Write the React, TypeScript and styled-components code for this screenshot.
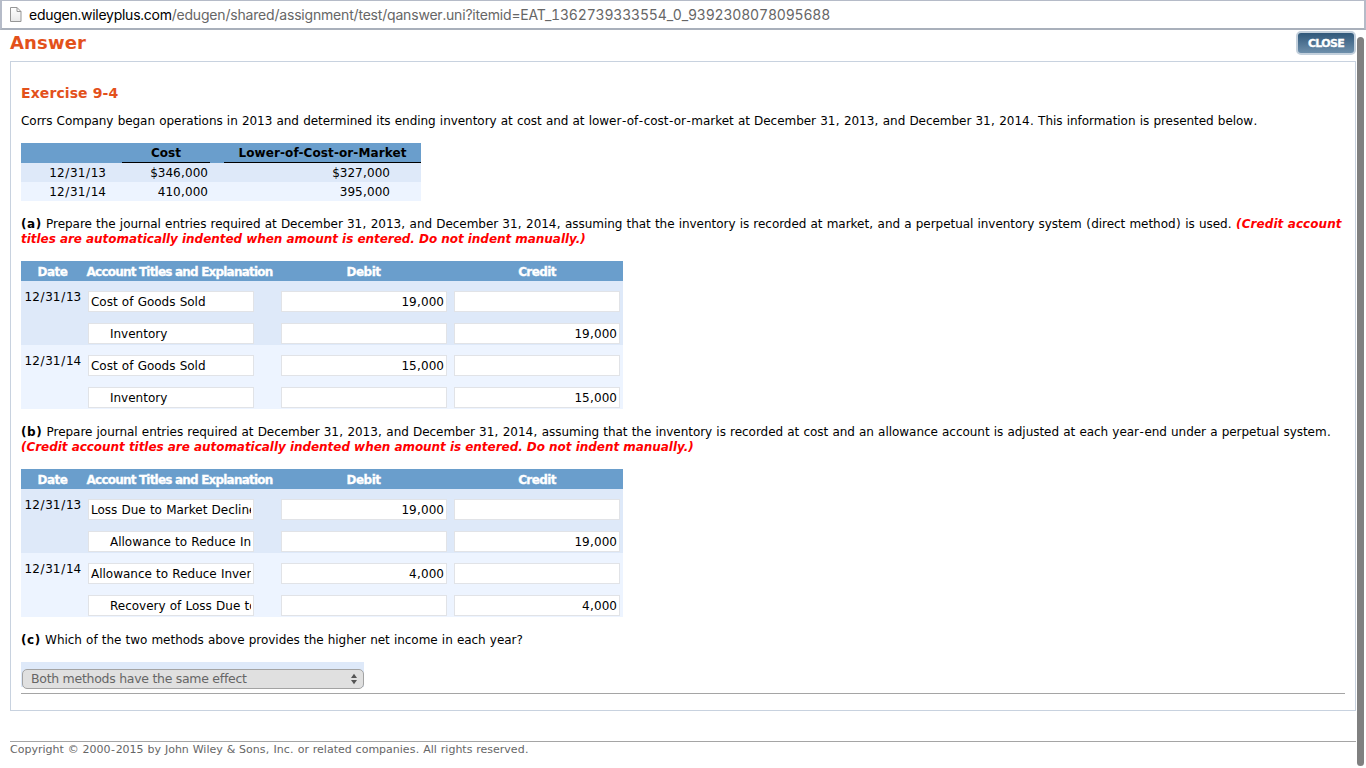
import React from 'react';
import styled, { createGlobalStyle } from 'styled-components';

const GlobalStyle = createGlobalStyle`
  * { box-sizing: border-box; }
  body {
    margin: 0;
    background: #fff;
    color: #000;
    font-family: Verdana, "DejaVu Sans", sans-serif;
    font-size: 12px;
    overflow: hidden;
  }
`;

const Window = styled.div`
  width: 1366px;
  height: 768px;
  display: flex;
  flex-direction: column;
`;

const AddressBar = styled.div`
  flex: none;
  display: flex;
  align-items: center;
  width: 1366px;
  height: 30px;
  padding: 0 0 0 8px;
  border: solid #b5bbc8;
  border-width: 1px 2px 2px 2px;
  border-bottom-color: #a9b0bb;
  background: #fff;
`;

const Url = styled.div`
  margin-left: 6px;
  font-family: Inter, sans-serif;
  font-size: 14px;
  font-variant-numeric: tabular-nums;
  line-height: 20px;
  white-space: nowrap;
  color: #666;
  letter-spacing: -0.19px;
`;

const Domain = styled.span`
  color: #000;
  letter-spacing: -0.26px;
`;

const Viewport = styled.div`
  flex: 1;
  display: flex;
  justify-content: space-between;
  padding: 0 2px 0 10px;
`;

const Page = styled.div`
  width: 1346px;
`;

const ScrollThumb = styled.div`
  width: 7px;
  height: 729px;
  margin-top: 7px;
  border-radius: 4px;
  background: #808080;
`;

const TitleBar = styled.div`
  display: flex;
  justify-content: space-between;
  height: 31px;
`;

const Heading = styled.h1`
  margin: 0;
  color: #e3511b;
  font-size: 18px;
  line-height: 26px;
  letter-spacing: 0.15px;
`;

const CloseButton = styled.button`
  width: 60px;
  height: 24px;
  margin: 1px 0 0;
  padding: 1px 0 0;
  border: 2px solid #c3d0dc;
  border-radius: 5px;
  background: linear-gradient(#30587a, #6e8fab);
  color: #fff;
  font: bold 11px/19px "DejaVu Sans", sans-serif;
  letter-spacing: -0.65px;
  -webkit-text-stroke: 0.3px #fff;
`;

const Panel = styled.main`
  height: 650px;
  padding: 20px 10px 0;
  border: 1px solid #c8d2df;
`;

const ExerciseTitle = styled.h2`
  margin: 0 0 9px;
  color: #e3511b;
  font-size: 14px;
  line-height: 22px;
  letter-spacing: 0.1px;
`;

const Paragraph = styled.p`
  margin: 0 0 14px;
  padding-top: 1px;
  line-height: 15px;
  white-space: nowrap;
`;

const Line = styled.span`
  display: block;
  height: 15px;
  word-spacing: 0.42px;
  letter-spacing: -0.04px;
`;

const Mark = styled.span<{ $extra: number }>`
  margin: 0 ${(p) => p.$extra / 2}px;
`;

const Hint = styled.em<{ $ls?: number }>`
  color: #f00;
  font-weight: bold;
  word-spacing: 0;
  letter-spacing: ${(p) => p.$ls ?? 0}px;
`;

const Part = styled.b`
  letter-spacing: 0.6px;
`;

const CostTable = styled.div`
  width: 400px;
  margin-bottom: 15px;
`;

const CostRow = styled.div<{ $tone: string; $h: number }>`
  display: grid;
  grid-template-columns: 101px 88px 14px 197px;
  height: ${(p) => p.$h}px;
  line-height: 19px;
  background: ${(p) => p.$tone};
`;

const CostHead = styled.div<{ $col: number; $ls: number }>`
  grid-column: ${(p) => p.$col};
  padding-top: 1px;
  border-bottom: 1px solid #000;
  font-weight: bold;
  line-height: 18px;
  text-align: center;
  white-space: nowrap;
  letter-spacing: ${(p) => p.$ls}px;
`;

const CostCell = styled.div<{ $col: number; $right: number }>`
  grid-column: ${(p) => p.$col};
  padding: 1px ${(p) => p.$right}px 0 0;
  line-height: 18px;
  text-align: right;
`;

const Journal = styled.div`
  width: 602px;
  margin-bottom: 15px;
`;

const JournalHead = styled.div`
  display: grid;
  grid-template-columns: 63px 191px 177px 170px;
  height: 20px;
  padding-top: 1px;
  background: #6a9ecc;
  color: #fff;
  font-weight: bold;
  line-height: 20px;
  text-align: center;
  white-space: nowrap;
  -webkit-text-stroke: 0.3px #fff;
`;

const ColumnTitle = styled.span<{ $ls: number }>`
  height: 19px;
  letter-spacing: ${(p) => p.$ls}px;
`;

const EntryGroup = styled.div<{ $tone: string }>`
  display: grid;
  grid-template-columns: 67px 532px;
  height: 64px;
  background: ${(p) => p.$tone};
`;

const EntryDate = styled.div`
  padding: 9px 0 0 3.5px;
  line-height: 15px;
`;

const Fields = styled.div`
  display: flex;
  flex-direction: column;
  gap: 11px;
  padding-top: 10px;
`;

const FieldRow = styled.div`
  display: grid;
  grid-template-columns: 193px 173px 166px;
  height: 21px;
`;

const Field = styled.div<{ $amount?: boolean }>`
  width: 166px;
  height: 21px;
  padding: 1px 2px 0;
  border: 1px solid #e1e3e7;
  background: #fff;
  line-height: 18px;
  text-align: ${(p) => (p.$amount ? 'right' : 'left')};
`;

const FieldText = styled.div<{ $indent?: boolean }>`
  overflow: hidden;
  white-space: nowrap;
  padding-left: ${(p) => (p.$indent ? 19 : 0)}px;
  word-spacing: 0.42px;
  letter-spacing: -0.01px;
`;

const SelectWrap = styled.div`
  width: 343px;
  height: 25px;
  padding: 7px 0 0 1px;
  background: #dee9f9;
`;

const Select = styled.div`
  display: flex;
  align-items: center;
  justify-content: space-between;
  width: 342px;
  height: 20px;
  padding: 0 6px 0 8px;
  border: 1px solid #a3a3a3;
  border-radius: 5px;
  background: #e0e0e0;
  color: #666;
  font-size: 12.5px;
  line-height: 18px;
  white-space: nowrap;
  letter-spacing: -0.28px;
`;

const Rule = styled.div`
  height: 1px;
  margin-top: 6px;
  background: #a5a5a5;
`;

const Footer = styled.footer`
  margin-top: 30px;
  border-top: 1px solid #a5a5a5;
  color: #666;
  font-size: 11px;
  line-height: 15px;
  white-space: nowrap;
  word-spacing: 0.4px;
`;

type Entry = { title: string; debit?: string; credit?: string; indent?: boolean };
type Group = { date: string; entries: Entry[] };

const blue = '#6a9ecc';
const tones = ['#dee9f9', '#edf4ff'];

// Extra advance for punctuation, which is set wider than the letters.
const markSpacing: Record<string, number> = { '-': 1.1, '/': 1.4, ',': 0.55, '.': 0.55, '(': 0.75, ')': 0.75 };

function Copy({ children }: { children: string }) {
  return (
    <>
      {children.split(/([-/,.()])/).map((part, i) =>
        part in markSpacing ? <Mark key={i} $extra={markSpacing[part]}>{part}</Mark> : part
      )}
    </>
  );
}

const marketEntries: Group[] = [
  { date: '12/31/13', entries: [{ title: 'Cost of Goods Sold', debit: '19,000' }, { title: 'Inventory', credit: '19,000', indent: true }] },
  { date: '12/31/14', entries: [{ title: 'Cost of Goods Sold', debit: '15,000' }, { title: 'Inventory', credit: '15,000', indent: true }] },
];

const allowanceEntries: Group[] = [
  { date: '12/31/13', entries: [{ title: 'Loss Due to Market Decline', debit: '19,000' }, { title: 'Allowance to Reduce Inventory', credit: '19,000', indent: true }] },
  { date: '12/31/14', entries: [{ title: 'Allowance to Reduce Inventory', debit: '4,000' }, { title: 'Recovery of Loss Due to Market', credit: '4,000', indent: true }] },
];

function JournalTable({ groups }: { groups: Group[] }) {
  return (
    <Journal>
      <JournalHead>
        <ColumnTitle $ls={-0.45}>Date</ColumnTitle>
        <ColumnTitle $ls={-0.8}>Account Titles and Explanation</ColumnTitle>
        <ColumnTitle $ls={-0.5}>Debit</ColumnTitle>
        <ColumnTitle $ls={-0.6}>Credit</ColumnTitle>
      </JournalHead>
      {groups.map((g, i) => (
        <EntryGroup key={g.date} $tone={tones[i]}>
          <EntryDate><Copy>{g.date}</Copy></EntryDate>
          <Fields>
            {g.entries.map((e) => (
              <FieldRow key={e.title}>
                <Field><FieldText $indent={e.indent}>{e.title}</FieldText></Field>
                <Field $amount>{e.debit && <Copy>{e.debit}</Copy>}</Field>
                <Field $amount>{e.credit && <Copy>{e.credit}</Copy>}</Field>
              </FieldRow>
            ))}
          </Fields>
        </EntryGroup>
      ))}
    </Journal>
  );
}

function PageIcon() {
  return (
    <svg width="13" height="17" viewBox="0 0 13 17" fill="none">
      <defs>
        <linearGradient id="sheet" x1="0" y1="0" x2="0" y2="1">
          <stop offset="0" stopColor="#fff" />
          <stop offset="1" stopColor="#e8e8e8" />
        </linearGradient>
      </defs>
      <path d="M.5 1.500h6.500l4 4v10H.5z" fill="url(#sheet)" stroke="#969696" />
      <path d="M7 1.500v4h4" stroke="#969696" />
    </svg>
  );
}

export default function App() {
  return (
    <Window>
      <GlobalStyle />
      <AddressBar>
        <PageIcon />
        <Url>
          <Domain>edugen.wileyplus.com</Domain>
          /edugen/shared/assignment/test/qanswer.uni?itemid=EAT_1362739333554_0_9392308078095688
        </Url>
      </AddressBar>
      <Viewport>
        <Page>
          <TitleBar>
            <Heading>Answer</Heading>
            <CloseButton>CLOSE</CloseButton>
          </TitleBar>
          <Panel>
            <ExerciseTitle>Exercise 9-4</ExerciseTitle>
            <Paragraph>
              <Line>
                <Copy>Corrs Company began operations in 2013 and determined its ending inventory at cost and at lower-of-cost-or-market at December 31, 2013, and December 31, 2014. This information is presented below.</Copy>
              </Line>
            </Paragraph>
            <CostTable>
              <CostRow $tone={blue} $h={20}>
                <CostHead $col={2} $ls={0}>Cost</CostHead>
                <CostHead $col={4} $ls={0.1}>Lower-of-Cost-or-Market</CostHead>
              </CostRow>
              <CostRow $tone={tones[0]} $h={19}>
                <CostCell $col={1} $right={16}><Copy>12/31/13</Copy></CostCell>
                <CostCell $col={2} $right={2}><Copy>$346,000</Copy></CostCell>
                <CostCell $col={4} $right={31}><Copy>$327,000</Copy></CostCell>
              </CostRow>
              <CostRow $tone={tones[1]} $h={19}>
                <CostCell $col={1} $right={16}><Copy>12/31/14</Copy></CostCell>
                <CostCell $col={2} $right={2}><Copy>410,000</Copy></CostCell>
                <CostCell $col={4} $right={31}><Copy>395,000</Copy></CostCell>
              </CostRow>
            </CostTable>
            <Paragraph>
              <Line>
                <Part>(a)</Part> <Copy>Prepare the journal entries required at December 31, 2013, and December 31, 2014, assuming that the inventory is recorded at market, and a perpetual inventory system (direct method) is used. </Copy><Hint $ls={0.08}>(Credit account</Hint>
              </Line>
              <Line>
                <Hint $ls={-0.04}>titles are automatically indented when amount is entered. Do not indent manually.)</Hint>
              </Line>
            </Paragraph>
            <JournalTable groups={marketEntries} />
            <Paragraph>
              <Line>
                <Part>(b)</Part> <Copy>Prepare journal entries required at December 31, 2013, and December 31, 2014, assuming that the inventory is recorded at cost and an allowance account is adjusted at each year-end under a perpetual system.</Copy>
              </Line>
              <Line>
                <Hint $ls={-0.04}>(Credit account titles are automatically indented when amount is entered. Do not indent manually.)</Hint>
              </Line>
            </Paragraph>
            <JournalTable groups={allowanceEntries} />
            <Paragraph>
              <Line><Part>(c)</Part> Which of the two methods above provides the higher net income in each year?</Line>
            </Paragraph>
            <SelectWrap>
              <Select>
                Both methods have the same effect
                <svg width="6" height="12" viewBox="0 0 6 12" fill="#555">
                  <path d="M0 5 3 .8 6 5zM0 7l3 4.200L6 7z" />
                </svg>
              </Select>
            </SelectWrap>
            <Rule />
          </Panel>
          <Footer><Copy>Copyright © 2000-2015 by John Wiley &amp; Sons, Inc. or related companies. All rights reserved.</Copy></Footer>
        </Page>
        <ScrollThumb />
      </Viewport>
    </Window>
  );
}
